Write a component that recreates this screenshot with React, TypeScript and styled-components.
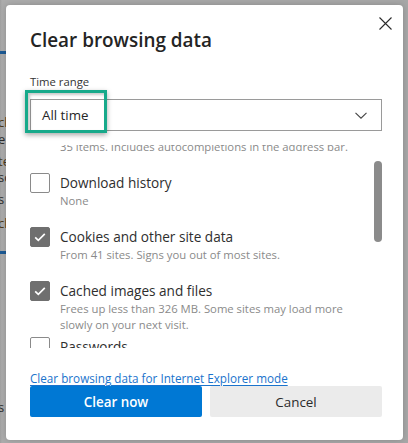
import React, { useLayoutEffect, useRef } from 'react'
import styled, { createGlobalStyle } from 'styled-components'

const FONT = `'Open Sans', 'Noto Sans', sans-serif`

const GlobalStyle = createGlobalStyle`
  html, body {
    margin: 0;
    padding: 0;
  }

  body {
    width: 408px;
    height: 443px;
    overflow: hidden;
    background: #a7a7a7;
    font-family: ${FONT};
  }
`

type Item = {
  title: string
  detail: string[]
  checked: boolean
}

const ITEMS: Item[] = [
  {
    title: 'Browsing history',
    detail: ['35 items. Includes autocompletions in the address bar.'],
    checked: false,
  },
  { title: 'Download history', detail: ['None'], checked: false },
  {
    title: 'Cookies and other site data',
    detail: ['From 41 sites. Signs you out of most sites.'],
    checked: true,
  },
  {
    title: 'Cached images and files',
    detail: ['Frees up less than 326 MB. Some sites may load more', 'slowly on your next visit.'],
    checked: true,
  },
  { title: 'Passwords', detail: ['None'], checked: false },
  { title: 'Autofill form data (includes forms and cards)', detail: ['None'], checked: false },
]

// scraps of the dimmed page that peek out at the left edge
const EDGE: { text?: string; top: number; $warm?: boolean; rule?: boolean }[] = [
  { rule: true, top: 51 },
  { text: 'ck', top: 60, $warm: true },
  { text: 'e', top: 1 },
  { text: 'te', top: 6, $warm: true },
  { text: 'sc', top: 0 },
  { text: 's', top: 6 },
  { text: 'ck', top: 8, $warm: true },
  { rule: true, top: 20 },
  { text: 's', top: 145 },
]

const SCROLL_OFFSET = 26

const App = () => {
  const viewportRef = useRef<HTMLDivElement>(null)

  useLayoutEffect(() => {
    if (viewportRef.current) viewportRef.current.scrollTop = SCROLL_OFFSET
  }, [])

  return (
    <Page>
      <GlobalStyle />
      <PageEdge>
        {EDGE.map((e, i) =>
          e.rule ? (
            <EdgeRule key={i} $top={e.top} />
          ) : (
            <EdgeWord key={i} $top={e.top} $warm={e.$warm}>
              {e.text}
            </EdgeWord>
          ),
        )}
      </PageEdge>

      <Dialog role="dialog" aria-label="Clear browsing data">
        <CloseButton aria-label="Close">
          <svg width="13" height="13" viewBox="0 0 13 13">
            <path d="M0.5 0.5L12.5 12.5M12.5 0.5L0.5 12.5" stroke="#2b2b2b" strokeWidth="1.1" fill="none" />
          </svg>
        </CloseButton>

        <Title>Clear browsing data</Title>

        <FieldLabel>Time range</FieldLabel>
        <SelectWrap>
          <Select>
            <span>All time</span>
            <svg width="12" height="7" viewBox="0 0 12 7">
              <path d="M0.5 0.8L6 6.2L11.5 0.8" stroke="#444" strokeWidth="1.1" fill="none" />
            </svg>
          </Select>
          <Highlight />
        </SelectWrap>

        <ScrollArea>
          <Viewport ref={viewportRef}>
            {ITEMS.map((item) => (
              <Row key={item.title}>
                <Checkbox $checked={item.checked}>
                  {item.checked && (
                    <svg width="20" height="20" viewBox="0 0 20 20">
                      <path d="M5.2 10.4L8.3 13.4L14.8 6.8" stroke="#fff" strokeWidth="1.7" fill="none" />
                    </svg>
                  )}
                </Checkbox>
                <RowText>
                  <RowTitle>{item.title}</RowTitle>
                  {item.detail.map((line) => (
                    <RowDetail key={line}>{line}</RowDetail>
                  ))}
                </RowText>
              </Row>
            ))}
          </Viewport>
          <Track>
            <Thumb />
          </Track>
        </ScrollArea>

        <IELink href="#">Clear browsing data for Internet Explorer mode</IELink>

        <Buttons>
          <Button $primary>Clear now</Button>
          <Button>Cancel</Button>
        </Buttons>
      </Dialog>
    </Page>
  )
}

export default App

const Page = styled.div`
  position: relative;
  width: 408px;
  height: 443px;
  overflow: hidden;
  background: #a7a7a7;
`

const PageEdge = styled.div`
  display: flex;
  flex-direction: column;
  width: 30px;
  background: linear-gradient(90deg, #9e9e9e 0, #acacac 2px, #acacac 100%);
  height: 100%;
`

const EdgeRule = styled.div<{ $top: number }>`
  margin-top: ${({ $top }) => $top}px;
  height: 3px;
  background: #1d5a94;
`

const EdgeWord = styled.div<{ $top: number; $warm?: boolean }>`
  margin-top: ${({ $top }) => $top}px;
  margin-left: -2px;
  font-size: 13px;
  line-height: 16px;
  color: ${({ $warm }) => ($warm ? '#4b3a1c' : '#2c2c2c')};
`

const Dialog = styled.div`
  position: absolute;
  left: 6px;
  top: 5px;
  width: 397px;
  height: 435px;
  box-sizing: border-box;
  padding: 21px 21px 23px 24px;
  display: flex;
  flex-direction: column;
  background: #fff;
  border-radius: 4px;
  box-shadow: 0 0 6px rgba(0, 0, 0, 0.18);
`

const CloseButton = styled.button`
  position: absolute;
  top: 6px;
  right: 6px;
  width: 24px;
  height: 24px;
  padding: 0;
  border: none;
  background: transparent;
  display: flex;
  align-items: center;
  justify-content: center;
`

const Title = styled.h2`
  margin: 0;
  font-size: 18.9px;
  line-height: 28px;
  font-weight: 600;
  color: #242424;
`

const FieldLabel = styled.div`
  margin-top: 20px;
  font-size: 11.3px;
  line-height: 16px;
  color: #333;
`

const SelectWrap = styled.div`
  position: relative;
  margin-top: 9px;
`

const Select = styled.div`
  height: 32px;
  box-sizing: border-box;
  border: 1px solid #9a9a9a;
  padding: 0 14px 0 11px;
  display: flex;
  align-items: center;
  justify-content: space-between;
  font-size: 13.3px;
  color: #262626;
`

const Highlight = styled.div`
  position: absolute;
  left: -5px;
  top: -9px;
  width: 82px;
  height: 43px;
  box-sizing: border-box;
  border: 3px solid #17a98a;
  box-shadow: 0 2px 5px rgba(0, 0, 0, 0.35), inset 2px 2px 3px rgba(0, 0, 0, 0.22);
`

const ScrollArea = styled.div`
  margin-top: 14px;
  height: 203px;
  display: flex;
`

const Viewport = styled.div`
  flex: 1;
  overflow: hidden;
`

const Track = styled.div`
  width: 8px;
  display: flex;
  flex-direction: column;
`

const Thumb = styled.div`
  margin-top: 16px;
  height: 81px;
  border-radius: 4px;
  background: #8b8b8b;
`

const Row = styled.div`
  display: grid;
  grid-template-columns: 20px 1fr;
  column-gap: 10px;
  align-items: start;
  min-height: 54px;
  padding-bottom: 4px;
  box-sizing: border-box;
`

const Checkbox = styled.div<{ $checked: boolean }>`
  width: 20px;
  height: 20px;
  box-sizing: border-box;
  border-radius: 2px;
  border: 1px solid ${({ $checked }) => ($checked ? '#6f6f6f' : '#8a8a8a')};
  background: ${({ $checked }) => ($checked ? '#6f6f6f' : '#fff')};
  svg {
    display: block;
    margin: -1px;
  }
`

const RowText = styled.div`
  display: flex;
  flex-direction: column;
`

const RowTitle = styled.div`
  font-size: 13.6px;
  line-height: 20px;
  color: #2e2e2e;
  white-space: nowrap;
`

const RowDetail = styled.div`
  font-size: 11.3px;
  line-height: 16px;
  color: #8a8a8a;
  white-space: nowrap;
`

const IELink = styled.a`
  margin-top: 22px;
  display: block;
  align-self: flex-start;
  font-size: 11.7px;
  line-height: 16px;
  color: #1a73cc;
  text-decoration: underline;
  text-underline-offset: 2px;
`

const Buttons = styled.div`
  display: grid;
  grid-template-columns: 1fr 1fr;
  column-gap: 8px;
`

const Button = styled.button<{ $primary?: boolean }>`
  height: 31px;
  border: none;
  border-radius: 2px;
  font-family: ${FONT};
  font-size: 13.4px;
  font-weight: ${({ $primary }) => ($primary ? 600 : 400)};
  color: ${({ $primary }) => ($primary ? '#fff' : '#2b2b2b')};
  background: ${({ $primary }) => ($primary ? '#0078d4' : '#ebebeb')};
`
